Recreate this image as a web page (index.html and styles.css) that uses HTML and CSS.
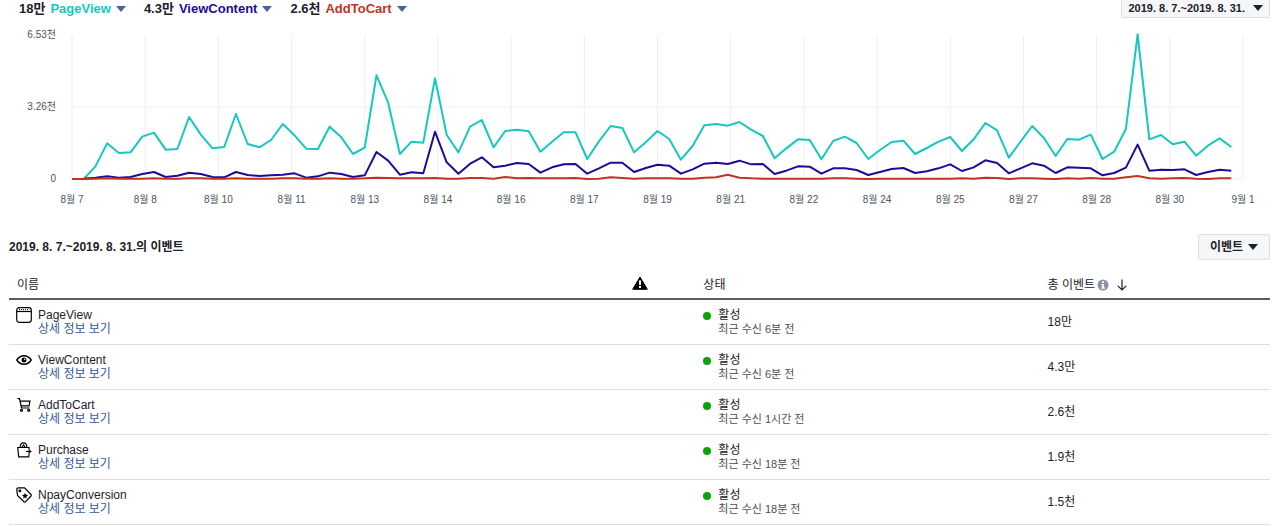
FILE: index.html
```html
<!DOCTYPE html>
<html lang="ko">
<head>
  <meta charset="UTF-8">
  <title>이벤트</title>
  <meta name="viewport" content="width=device-width, initial-scale=1.0">
  <link rel="stylesheet" href="styles.css">
</head>
<body>
  <div class="top-bar">
    <div class="legend">
      <button class="legend-item">18만 <span class="teal">PageView</span><svg class="caret" viewBox="0 0 10 6"><path d="M0 0h10L5 6z"/></svg></button>
      <button class="legend-item">4.3만 <span class="purple">ViewContent</span><svg class="caret" viewBox="0 0 10 6"><path d="M0 0h10L5 6z"/></svg></button>
      <button class="legend-item">2.6천 <span class="red">AddToCart</span><svg class="caret" viewBox="0 0 10 6"><path d="M0 0h10L5 6z"/></svg></button>
    </div>
    <button class="btn btn-date">2019. 8. 7.~2019. 8. 31.<svg class="caret" viewBox="0 0 10 6"><path d="M0 0h10L5 6z"/></svg></button>
  </div>

  <div class="chart">
    <div class="y-axis"><span>6.53천</span><span>3.26천</span><span>0</span></div>
    <svg class="plot" id="plot" viewBox="0 0 100 432" preserveAspectRatio="none"></svg>
    <div class="x-axis" id="x-axis"></div>
  </div>

  <div class="section-head">
    <h2>2019. 8. 7.~2019. 8. 31.의 이벤트</h2>
    <button class="btn">이벤트<svg class="caret" viewBox="0 0 10 6"><path d="M0 0h10L5 6z"/></svg></button>
  </div>

  <table class="events">
    <thead>
      <tr>
        <th class="col-name">이름</th>
        <th class="col-warn"><svg class="warn" viewBox="0 0 16 14"><path d="M8 1L15.300 13.300H.7z" stroke="#000" stroke-linejoin="round"/><path d="M7 4.500h2v4.500H7zM7 10h2v2H7z" fill="#fff"/></svg></th>
        <th class="col-status">상태</th>
        <th class="col-total">
          <div class="total-head">총 이벤트
            <svg class="info" viewBox="0 0 12 12"><circle cx="6" cy="6" r="5.500" fill="#8a93a3"/><path d="M5 2.300h2v1.700H5zM4.300 5h2.700v3.500h1v1.200H4.200V8.500h1V6.200h-.9z" fill="#fff"/></svg>
            <svg class="sort" viewBox="0 0 10 12"><path d="M5 .5v10.500M.8 6.800L5 11l4.200-4.200" fill="none" stroke="#1d2129" stroke-width="1.200"/></svg>
          </div>
        </th>
      </tr>
    </thead>
    <tbody>
      <tr>
        <td><div class="event">
          <svg viewBox="0 0 16 16"><rect x=".7" y=".7" width="14.600" height="14.600" rx="2.500"/><path d="M1 4.500h14"/><path d="M3 2.600h10" stroke-width="1" stroke-dasharray="1 1"/></svg>
          <div><div class="name">PageView</div><a href="#">상세 정보 보기</a></div>
        </div></td>
        <td></td>
        <td><div class="status"><div class="name">활성</div><div class="sub">최근 수신 6분 전</div></div></td>
        <td class="total">18만</td>
      </tr>
      <tr>
        <td><div class="event">
          <svg viewBox="0 0 16 16"><path d="M.8 8C4.500 2.300 11.500 2.300 15.200 8C11.500 13.700 4.500 13.700.8 8z" stroke-width="1.400"/><circle cx="8" cy="8" r="2.500" fill="#000" stroke="none"/><circle cx="8.800" cy="7.200" r=".8" fill="#fff" stroke="none"/></svg>
          <div><div class="name">ViewContent</div><a href="#">상세 정보 보기</a></div>
        </div></td>
        <td></td>
        <td><div class="status"><div class="name">활성</div><div class="sub">최근 수신 6분 전</div></div></td>
        <td class="total">4.3만</td>
      </tr>
      <tr>
        <td><div class="event">
          <svg viewBox="0 0 16 16"><path d="M1.500 1.700h2L5.500 11h8M4.200 4.200h9.800l-1 4.600H5.100"/><circle cx="5.500" cy="13.300" r="1"/><circle cx="12.700" cy="13.300" r="1"/></svg>
          <div><div class="name">AddToCart</div><a href="#">상세 정보 보기</a></div>
        </div></td>
        <td></td>
        <td><div class="status"><div class="name">활성</div><div class="sub">최근 수신 1시간 전</div></div></td>
        <td class="total">2.6천</td>
      </tr>
      <tr>
        <td><div class="event">
          <svg viewBox="0 0 16 16"><path d="M13 7.500V5.500H1.700L2.700 14.800h10l.4-3.300"/><path d="M4 5.500C4.500-.7 10.500-.7 11 5.500M5.800 5.300L7.500 3l1.700 2.300"/><path d="M10 9.500h3.500"/><path d="M12.700 7l3 2.500-3 2.500z" fill="#000" stroke="none"/></svg>
          <div><div class="name">Purchase</div><a href="#">상세 정보 보기</a></div>
        </div></td>
        <td></td>
        <td><div class="status"><div class="name">활성</div><div class="sub">최근 수신 18분 전</div></div></td>
        <td class="total">1.9천</td>
      </tr>
      <tr>
        <td><div class="event">
          <svg viewBox="0 0 16 16"><path d="M.8 2.500Q.8.800 2.500.800H8.500l6.500 6.700q.6.800 0 1.500L9.500 14.800q-.8.600-1.600 0L1.500 8.500z"/><circle cx="3.900" cy="3.800" r=".9"/><path d="M9 5.700l.9 2 2.200.2-1.700 1.500.5 2.200L9 10.500l-1.900 1.100.5-2.200L5.900 7.900l2.200-.2z" fill="#000" stroke="none"/></svg>
          <div><div class="name">NpayConversion</div><a href="#">상세 정보 보기</a></div>
        </div></td>
        <td></td>
        <td><div class="status"><div class="name">활성</div><div class="sub">최근 수신 18분 전</div></div></td>
        <td class="total">1.5천</td>
      </tr>
    </tbody>
  </table>

  <script src="chart.js"></script>
</body>
</html>
```
FILE: styles.css
```css
:root {
  --text: #1d2129;
  --muted: #4b4f56;
  --link: #365899;
  --line: #dddfe2;
  --teal: #16c7c0;
  --purple: #1f0a99;
  --red: #c0351d;
}

* { box-sizing: border-box; }

body {
  margin: 0;
  background: #fff;
  color: var(--text);
  font-family: "Liberation Sans", "Noto Sans CJK KR", sans-serif;
  font-size: 12px;
  line-height: 14px;
}

button {
  font: inherit;
  font-weight: bold;
  color: inherit;
  cursor: pointer;
  display: flex;
  align-items: center;
}

.top-bar {
  display: flex;
  justify-content: space-between;
  padding: 0 10px 0 19px;
}

.legend {
  display: flex;
  gap: 18px;
}

.legend-item {
  background: none;
  border: none;
  padding: 0;
  gap: 5px;
  font-size: 13px;
}

.caret {
  width: 10px;
  height: 6px;
  fill: currentColor;
}

.legend-item .caret { fill: #4a6398; }

.teal { color: var(--teal); }
.purple { color: var(--purple); }
.red { color: var(--red); }

.btn {
  height: 26px;
  padding: 0 11px;
  gap: 5px;
  background: #f5f6f7;
  border: 1px solid var(--line);
  border-radius: 2px;
}

.btn-date {
  height: 18px;
  padding: 0 6px 2px;
  gap: 8px;
  border-top: none;
  border-radius: 0 0 2px 2px;
  font-size: 11px;
}

.chart {
  display: grid;
  grid-template-columns: 56px 1fr;
  column-gap: 16px;
  padding: 11px 37px 0 0;
  color: #4b5563;
  font-size: 10px;
  line-height: 12px;
}

.y-axis {
  display: flex;
  flex-direction: column;
  justify-content: space-between;
  text-align: right;
}

.plot {
  width: 100%;
  height: 144px;
  margin: 6px 0;
  overflow: visible;
}

.plot path,
.plot polyline {
  fill: none;
  stroke-width: 2;
  stroke-linejoin: round;
  vector-effect: non-scaling-stroke;
}

.plot .grid {
  stroke: #efefef;
  stroke-width: 1;
}

.plot .page-view { stroke: var(--teal); }
.plot .view-content { stroke: var(--purple); }
.plot .add-to-cart { stroke: var(--red); }

.x-axis {
  grid-column: 2;
  display: flex;
  justify-content: space-between;
  margin-top: 9px;
}

.x-axis span {
  width: 0;
  display: flex;
  justify-content: center;
  white-space: nowrap;
}

.section-head {
  display: flex;
  justify-content: space-between;
  align-items: center;
  padding: 0 10px 0 9px;
  margin-top: 28px;
}

h2 {
  margin: 0;
  font-size: 12px;
}

.events {
  width: calc(100% - 19px);
  margin: 0 10px 0 9px;
  border-collapse: separate;
  border-spacing: 0;
  table-layout: fixed;
}

th {
  height: 40px;
  padding: 11px 8px 0;
  border-bottom: 2px solid #5a5c60;
  font-weight: normal;
  text-align: left;
}

.col-name { width: 48.8%; }
.col-warn { width: 71px; padding-top: 8px; }
.col-status { width: 27.3%; }

.warn {
  display: block;
  width: 16px;
  height: 14px;
}

.total-head {
  display: flex;
  align-items: center;
  gap: 2px;
}

.info {
  width: 12px;
  height: 12px;
}

.sort {
  width: 10px;
  height: 12px;
  margin-left: 6px;
}

td {
  height: 45px;
  padding: 8px 8px 0;
  border-bottom: 1px solid var(--line);
  vertical-align: top;
}

td:first-child { padding: 7px 7px 0; }

.event {
  display: flex;
  gap: 6px;
}

.event svg {
  width: 16px;
  height: 16px;
  fill: none;
  stroke: #000;
  stroke-width: 1.2;
}

.event .name { padding-top: 1px; }

a {
  display: block;
  color: var(--link);
  text-decoration: none;
}

.status {
  position: relative;
  padding-left: 15px;
}

.status::before {
  content: "";
  position: absolute;
  left: 0;
  top: 4px;
  width: 8px;
  height: 8px;
  border-radius: 50%;
  background: #0ca30a;
}

.sub {
  color: var(--muted);
  font-size: 11px;
}

.total {
  padding-top: 0;
  vertical-align: middle;
}
```
FILE: chart.js
```js
const series = {
  'page-view': [
    0, 0, 38, 107, 78, 80, 127, 139, 88, 90, 186, 133, 92, 96, 195, 105, 95, 117, 165, 131,
    91, 90, 157, 125, 75, 94, 311, 229, 75, 112, 109, 302, 132, 80, 157, 177, 95, 144, 148, 143,
    82, 112, 140, 140, 60, 113, 159, 153, 80, 110, 144, 120, 58, 99, 161, 165, 160, 171, 148, 129,
    62, 92, 119, 117, 59, 114, 127, 108, 60, 87, 111, 115, 75, 93, 112, 126, 84, 119, 168, 146,
    64, 112, 159, 123, 69, 120, 118, 133, 60, 82, 150, 434, 119, 132, 104, 112, 70, 100, 122, 96
  ],
  'view-content': [
    0, 1, 4, 8, 4, 6, 15, 21, 6, 10, 19, 15, 6, 5, 21, 12, 9, 11, 13, 17,
    4, 8, 19, 15, 6, 11, 81, 55, 13, 20, 17, 142, 50, 16, 46, 65, 35, 40, 48, 45,
    19, 35, 44, 45, 16, 32, 49, 49, 21, 33, 43, 40, 16, 29, 46, 49, 45, 55, 44, 45,
    15, 25, 38, 37, 16, 32, 32, 27, 12, 21, 30, 33, 18, 23, 32, 44, 24, 35, 56, 48,
    17, 32, 47, 40, 18, 35, 34, 32, 11, 18, 34, 103, 25, 28, 27, 29, 12, 21, 28, 25
  ],
  'add-to-cart': [
    0, 0, 1, 2, 1, 1, 1, 2, 1, 1, 2, 2, 1, 1, 2, 1, 1, 1, 2, 2,
    1, 1, 2, 1, 1, 2, 4, 3, 2, 2, 2, 3, 1, 1, 3, 3, 1, 6, 2, 3,
    2, 2, 2, 3, 0, 1, 5, 3, 1, 2, 2, 2, 1, 1, 4, 5, 13, 4, 2, 1,
    1, 1, 1, 1, 1, 2, 2, 1, 0, 1, 1, 1, 1, 1, 1, 1, 2, 1, 4, 3,
    0, 2, 2, 1, 0, 2, 1, 3, 1, 1, 5, 9, 2, 1, 2, 3, 1, 0, 2, 2
  ]
};

const days = ['8월 7', '8월 8', '8월 10', '8월 11', '8월 13', '8월 14', '8월 16', '8월 17', '8월 19',
  '8월 21', '8월 22', '8월 24', '8월 25', '8월 27', '8월 28', '8월 30', '9월 1'];

const height = 432;
const step = 100 / (days.length - 1);

// grid lines, one per day label
let grid = `M0 ${height / 2}H100M0 ${height}H100`;
days.forEach((day, i) => {
  grid += `M${i * step} 0V${height}`;
});

let svg = `<path class="grid" d="${grid}"/>`;
for (const name in series) {
  const points = series[name].map((v, i) => `${i},${height - v}`).join(' ');
  svg += `<polyline class="${name}" points="${points}"/>`;
}

document.getElementById('plot').innerHTML = svg;
document.getElementById('x-axis').innerHTML = days.map(d => `<span>${d}</span>`).join('');
```
